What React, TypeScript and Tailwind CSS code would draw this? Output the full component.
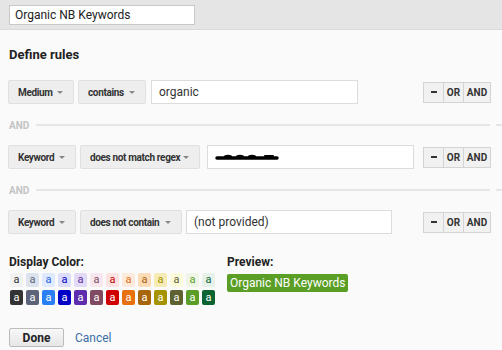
import React from "react";

const font = { fontFamily: "Roboto, 'Liberation Sans', sans-serif" };

function Select({ label, w }: { label: string; w: string }) {
  return (
    <div className={`${w} shrink-0 h-[24px] flex items-center justify-between pl-[9px] pr-[10px] bg-[#eeeeee] border border-[#e0e0e0] rounded-[2px] text-[10px] font-bold text-[#333] whitespace-nowrap tracking-[-0.35px]`}>
      <span>{label}</span>
      <span className="w-0 h-0 border-l-[3px] border-r-[3px] border-t-[3px] border-l-transparent border-r-transparent border-t-[#888]" />
    </div>
  );
}

function Ops() {
  return (
    <div className="ml-auto mr-[11px] shrink-0 flex h-[21px] border border-[#d4d4d4] bg-[#f1f1f1] text-[10px] font-bold text-[#333]">
      <div className="w-[20px] flex items-center justify-center border-r border-[#d4d4d4]">
        <span className="block w-[6px] h-[2px] bg-[#333]" />
      </div>
      <div className="w-[20px] flex items-center justify-center border-r border-[#d4d4d4]">OR</div>
      <div className="w-[26px] flex items-center justify-center">AND</div>
    </div>
  );
}

function Sep() {
  return (
    <div className="flex items-center h-[12px] pl-[9px]">
      <span className="text-[10px] font-bold text-[#c4c4c4]">AND</span>
      <span className="flex-1 h-[2px] bg-[#e6e6e6] ml-[7px]" />
      <span className="w-[6px] h-[2px] bg-[#e6e6e6] ml-[6px]" />
    </div>
  );
}

const light = [
  ["bg-[#f1f1f1]", "text-[#333333]"],
  ["bg-[#dde3ee]", "text-[#5a6378]"],
  ["bg-[#e0eaff]", "text-[#1d62e0]"],
  ["bg-[#dcdcfb]", "text-[#0000bb]"],
  ["bg-[#e3daf7]", "text-[#5a2fa0]"],
  ["bg-[#f8e6ef]", "text-[#7b4a5e]"],
  ["bg-[#fde2e2]", "text-[#c40000]"],
  ["bg-[#fdeadb]", "text-[#e06a10]"],
  ["bg-[#fbdcb6]", "text-[#a86010]"],
  ["bg-[#f6ebb4]", "text-[#a09000]"],
  ["bg-[#fbfbdc]", "text-[#5e6130]"],
  ["bg-[#eef5e6]", "text-[#5a9e25]"],
  ["bg-[#e6f1ea]", "text-[#0b6331]"],
];

const dark = [
  "bg-[#333333]",
  "bg-[#5d6479]",
  "bg-[#2a7ff5]",
  "bg-[#0000c6]",
  "bg-[#5e2eac]",
  "bg-[#7f4a62]",
  "bg-[#d10000]",
  "bg-[#e8710f]",
  "bg-[#a8650a]",
  "bg-[#a59300]",
  "bg-[#5e6130]",
  "bg-[#5a9e27]",
  "bg-[#0b6331]",
];

export default function App() {
  return (
    <div style={font} className="w-[502px] h-[350px] bg-[#fafafa] overflow-hidden text-[#222]">
      {/* Header */}
      <div className="h-[30px] bg-[#e5e5e5] border-b border-[#dadada] flex items-center pl-[9px]">
        <div className="w-[186px] h-[20px] bg-white border border-[#c8c8c8] flex items-center pl-[5px] text-[12px] text-[#222]">
          Organic NB Keywords
        </div>
      </div>

      <div className="pt-[17px] text-[13px] font-bold pl-[9px] leading-[16px]">Define rules</div>

      {/* Row 1 */}
      <div className="mt-[17px] flex items-center pl-[8px]">
        <Select label="Medium" w="w-[66px]" />
        <div className="w-[4px] shrink-0" />
        <Select label="contains" w="w-[68px]" />
        <div className="w-[5px] shrink-0" />
        <div className="w-[207px] shrink-0 h-[24px] bg-white border border-[#dcdcdc] flex items-center pl-[7px] text-[12px] text-[#333]">organic</div>
        <Ops />
      </div>

      <div className="mt-[15px]"><Sep /></div>

      {/* Row 2 */}
      <div className="mt-[14px] flex items-center pl-[8px]">
        <Select label="Keyword" w="w-[68px]" />
        <div className="w-[4px] shrink-0" />
        <Select label="does not match regex" w="w-[120px]" />
        <div className="w-[7px] shrink-0" />
        <div className="w-[207px] shrink-0 h-[24px] bg-white border border-[#dcdcdc] flex items-center pl-[7px]">
          <svg width="64" height="8" viewBox="0 0 64 8">
            <path d="M2 5 L62 5" stroke="#000" strokeWidth="3.5" fill="none" strokeLinecap="round" />
            <path d="M10 3.5 Q13 2 16 3.5 M22 3.5 Q25 2 28 3.5 M34 3.5 Q37 2 40 3.5 M50 3 L58 3" stroke="#000" strokeWidth="2" fill="none" strokeLinecap="round" />
          </svg>
        </div>
        <Ops />
      </div>

      <div className="mt-[15px]"><Sep /></div>

      {/* Row 3 */}
      <div className="mt-[14px] flex items-center pl-[8px]">
        <Select label="Keyword" w="w-[68px]" />
        <div className="w-[4px] shrink-0" />
        <Select label="does not contain" w="w-[102px]" />
        <div className="w-[4px] shrink-0" />
        <div className="w-[206px] shrink-0 h-[24px] bg-white border border-[#dcdcdc] flex items-center pl-[7px] text-[12px] text-[#333]">(not provided)</div>
        <Ops />
      </div>

      {/* Colors */}
      <div className="mt-[21px] flex pl-[9px]">
        <div>
          <div className="text-[12px] font-bold leading-[14px]">Display Color:</div>
          <div className="mt-[4px] flex gap-[3px] pl-[1px]">
            {light.map(([bg, tx], i) => (
              <div key={i} className={`w-[13px] h-[14px] rounded-[2px] ${bg} ${tx} text-[11px] leading-[14px] text-center`}>a</div>
            ))}
          </div>
          <div className="mt-[3px] flex gap-[3px] pl-[1px]">
            {dark.map((bg, i) => (
              <div key={i} className={`w-[13px] h-[15px] rounded-[2px] ${bg} text-white text-[11px] leading-[15px] text-center`}>a</div>
            ))}
          </div>
        </div>
        <div className="ml-[12px]">
          <div className="text-[12px] font-bold leading-[14px]">Preview:</div>
          <div className="mt-[5px] inline-block bg-[#5a9e25] text-white text-[12px] leading-[18px] px-[3px] rounded-[2px]">Organic NB Keywords</div>
        </div>
      </div>

      {/* Footer */}
      <div className="mt-[23px] flex items-center pl-[9px]">
        <div className="w-[55px] h-[19px] flex items-center justify-center bg-gradient-to-b from-[#f8f8f8] to-[#e6e6e6] border border-[#bcbcbc] rounded-[2px] text-[12px] font-bold text-[#222]">Done</div>
        <div className="ml-[11px] text-[12px] text-[#3b6ea5]">Cancel</div>
      </div>
    </div>
  );
}
